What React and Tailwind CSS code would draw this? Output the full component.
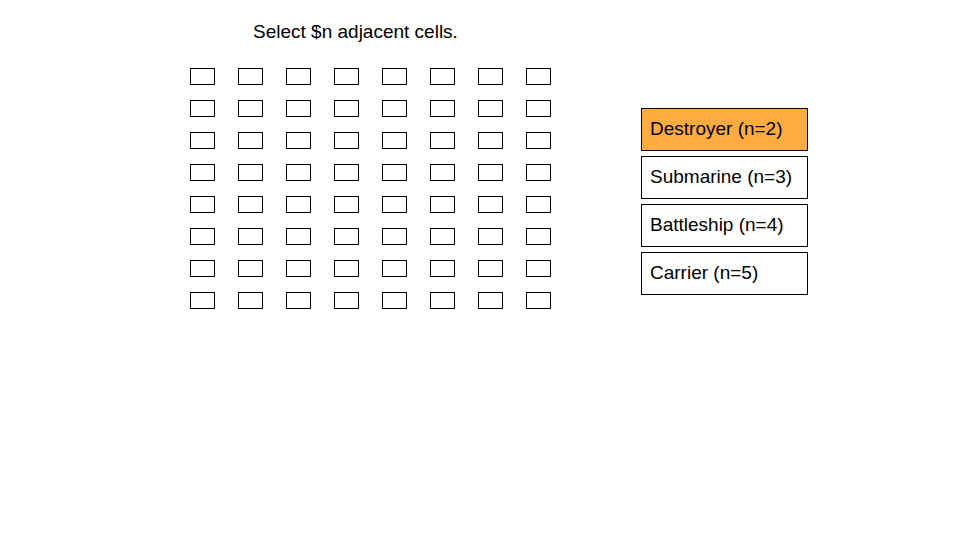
import { useState } from "react";

const SHIPS = [
  { name: "Destroyer", size: 2 },
  { name: "Submarine", size: 3 },
  { name: "Battleship", size: 4 },
  { name: "Carrier", size: 5 },
];

const CELLS = Array.from({ length: 64 }, (_, i) => i);

export default function App() {
  const [ship, setShip] = useState("Destroyer");
  const [picked, setPicked] = useState([]);

  const toggle = (i) =>
    setPicked((p) => (p.includes(i) ? p.filter((c) => c !== i) : [...p, i]));

  return (
    <main className="flex min-h-screen items-start justify-center gap-[90px] bg-white pt-5 pl-[38px] font-['Liberation_Sans',Arial,sans-serif] text-[19px] leading-6 text-black">
      <section className="flex flex-col gap-6">
        <h1 className="pl-[63px]">Select $n adjacent cells.</h1>
        <div className="grid grid-cols-[repeat(8,25px)] gap-x-[23px] gap-y-[15px]">
          {CELLS.map((i) => (
            <button
              key={i}
              type="button"
              aria-label={`Row ${Math.floor(i / 8) + 1}, column ${(i % 8) + 1}`}
              aria-pressed={picked.includes(i)}
              onClick={() => toggle(i)}
              className="h-[17px] border border-black bg-white aria-pressed:bg-[#ffab40]"
            />
          ))}
        </div>
      </section>
      <section className="mt-[88px] flex w-[167px] flex-col gap-[5px]">
        {SHIPS.map(({ name, size }) => (
          <button
            key={name}
            type="button"
            aria-pressed={ship === name}
            onClick={() => setShip(name)}
            className="h-[43px] border border-black bg-white px-2 pb-[2px] text-left whitespace-nowrap aria-pressed:bg-[#ffab40]"
          >
            {`${name} (n=${size})`}
          </button>
        ))}
      </section>
    </main>
  );
}
